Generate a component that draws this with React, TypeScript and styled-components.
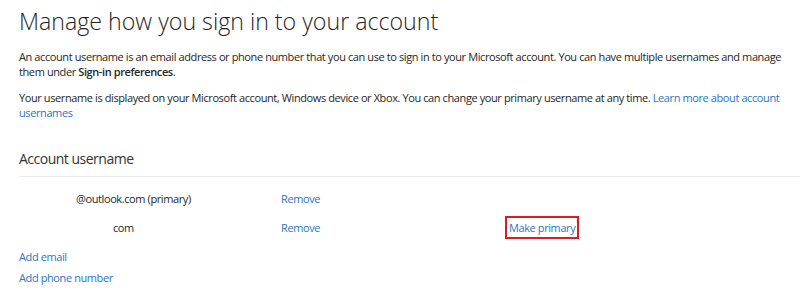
import styled, { createGlobalStyle } from "styled-components";

const GlobalStyle = createGlobalStyle`
  html, body {
    margin: 0;
    padding: 0;
    background: #ffffff;
  }
  body {
    font-family: "Open Sans", "Noto Sans", sans-serif;
    color: #262626;
  }
`;

const Page = styled.div`
  width: 800px;
  height: 298px;
  overflow: hidden;
  padding-left: 19px;
  box-sizing: border-box;
`;

const Title = styled.h1`
  margin: 0;
  padding-top: 6px;
  font-size: 23.2px;
  font-weight: 300;
  line-height: 30px;
  color: #1f1f1f;
  white-space: nowrap;
`;

const Paragraph = styled.p<{ $top: number }>`
  margin: ${(p) => p.$top}px 0 0;
  font-size: 11px;
  line-height: 15px;
  letter-spacing: -0.4px;
  white-space: nowrap;
`;

const Strong = styled.b`
  font-weight: 600;
`;

const Link = styled.a`
  color: #2b75c0;
  text-decoration: none;
  cursor: pointer;
`;

const SectionTitle = styled.h2`
  margin: 29px 0 0;
  font-size: 14px;
  font-weight: 400;
  line-height: 20px;
  letter-spacing: -0.5px;
  color: #333;
`;

const Divider = styled.div`
  margin-top: 7px;
  height: 1px;
  background: #ececec;
`;

const Rows = styled.div`
  padding-top: 10px;
  display: flex;
  flex-direction: column;
  gap: 14px;
`;

const Row = styled.div`
  display: grid;
  grid-template-columns: 262px 228px auto;
  align-items: center;
  height: 15px;
  font-size: 11px;
  letter-spacing: -0.4px;
`;

const Username = styled.span<{ $indent: number }>`
  padding-left: ${(p) => p.$indent}px;
`;

const Action = styled(Link)<{ $highlight?: boolean }>`
  justify-self: start;
  padding: 2px 2px;
  margin-left: -4px;
  border: 2px solid ${(p) => (p.$highlight ? "#dc1c23" : "transparent")};
`;

const AddLinks = styled.div`
  margin-top: 18px;
  display: flex;
  flex-direction: column;
  gap: 6px;
  font-size: 11px;
  line-height: 15px;
  letter-spacing: -0.4px;
`;

const accounts = [
  { name: "@outlook.com (primary)", indent: 57, primary: true },
  { name: "com", indent: 94, primary: false },
];

export default function App() {
  return (
    <Page>
      <GlobalStyle />
      <Title>Manage how you sign in to your account</Title>
      <Paragraph $top={13}>
        An account username is an email address or phone number that you can use to sign in to your Microsoft
        account. You can have multiple usernames and manage
        <br />
        them under <Strong>Sign-in preferences</Strong>.
      </Paragraph>
      <Paragraph $top={11}>
        Your username is displayed on your Microsoft account, Windows device or Xbox. You can change your primary
        username at any time. <Link>Learn more about account</Link>
        <br />
        <Link>usernames</Link>
      </Paragraph>
      <SectionTitle>Account username</SectionTitle>
      <Divider />
      <Rows>
        {accounts.map((a) => (
          <Row key={a.name}>
            <Username $indent={a.indent}>{a.name}</Username>
            <Action>Remove</Action>
            {!a.primary && <Action $highlight>Make primary</Action>}
          </Row>
        ))}
      </Rows>
      <AddLinks>
        <Link>Add email</Link>
        <Link>Add phone number</Link>
      </AddLinks>
    </Page>
  );
}
